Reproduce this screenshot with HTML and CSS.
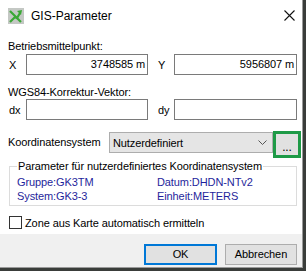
FILE: index.html
```html
<!DOCTYPE html>
<html>
<head>
<meta charset="utf-8">
<link rel="stylesheet" href="styles.css">
</head>
<body>
<div class="window">
  <div class="titlebar">
    <svg class="appicon" width="16" height="16" viewBox="0 0 16 16">
      <rect x="0" y="0" width="16" height="16" fill="#c4c8c4"/>
      <path d="M2 3 L13 14" stroke="#3aa835" stroke-width="2.2" fill="none"/>
      <path d="M2 14 L7 9 L9 10 L12 5" stroke="#3aa835" stroke-width="2.2" fill="none"/>
      <path d="M9 3 L14 2 L13 7 Z" fill="#3aa835"/>
    </svg>
    <span class="title">GIS-Parameter</span>
    <svg class="close" width="11" height="11" viewBox="0 0 11 11">
      <path d="M0.5 0.5 L10.5 10.5 M10.5 0.5 L0.5 10.5" stroke="#111" stroke-width="1.1"/>
    </svg>
  </div>
  <div class="content">
    <div class="heading h1">Betriebsmittelpunkt:</div>
    <div class="pair">
      <span class="lbl">X</span>
      <div class="field f1">3748585 m</div>
      <span class="lbl lbl-y">Y</span>
      <div class="field f2">5956807 m</div>
    </div>
    <div class="heading h2">WGS84-Korrektur-Vektor:</div>
    <div class="pair">
      <span class="lbl">dx</span>
      <div class="field f1"></div>
      <span class="lbl lbl-y">dy</span>
      <div class="field f2"></div>
    </div>
    <div class="koord">
      <span class="klbl">Koordinatensystem</span>
      <div class="combo">
        <span>Nutzerdefiniert</span>
        <svg width="9" height="5" viewBox="0 0 9 5"><path d="M0.5 0.5 L4.5 4.5 L8.5 0.5" stroke="#555" fill="none" stroke-width="1"/></svg>
      </div>
      <div class="dots"><div class="dots-inner">...</div></div>
    </div>
    <fieldset class="group">
      <legend>Parameter für nutzerdefiniertes Koordinatensystem</legend>
      <div class="grid">
        <span>Gruppe:GK3TM</span>
        <span>Datum:DHDN-NTv2</span>
        <span>System:GK3-3</span>
        <span>Einheit:METERS</span>
      </div>
    </fieldset>
    <label class="check"><span class="box"></span><span>Zone aus Karte automatisch ermitteln</span></label>
  </div>
  <div class="footer">
    <div class="btn ok">OK</div>
    <div class="btn">Abbrechen</div>
  </div>
</div>
</body>
</html>
```

FILE: styles.css
```css
html, body {
  margin: 0;
  padding: 0;
  background: #3a3d3a;
  height: 271px;
  overflow: hidden;
}
body {
  font-family: "Liberation Sans", Arial, sans-serif;
  font-size: 11px;
  letter-spacing: -0.1px;
  color: #000;
}
.window {
  width: 302px;
  height: 267px;
  background: #fff;
  border-right: 1px solid #9a9a9a;
  border-bottom: 1px solid #9a9a9a;
  display: flex;
  flex-direction: column;
}
.titlebar {
  height: 31px;
  display: flex;
  align-items: center;
  padding-left: 8px;
  flex: none;
}
.appicon { flex: none; margin-top: 1px; }
.title {
  margin-left: 7px;
  font-size: 12px;
  letter-spacing: 0;
  flex: 1;
}
.close { margin-right: 7px; margin-top: -1px; }
.content {
  flex: 1;
  padding: 0 0 0 8px;
  display: flex;
  flex-direction: column;
  white-space: nowrap;
}
.heading {
  line-height: 15px;
}
.h1 { margin-top: 8px; }
.h2 { margin-top: 11px; line-height: 13px; }
.pair {
  display: flex;
  align-items: center;
  height: 21px;
}
.pair > * { flex: none; }
.lbl {
  width: 18px;
  padding-left: 2px;
  box-sizing: border-box;
}
.lbl:first-child { padding-left: 1px; }
.lbl-y { width: 26px; padding-left: 10px; }
.field {
  height: 21px;
  box-sizing: border-box;
  border: 1px solid #7a7a7a;
  text-align: right;
  padding-right: 2px;
  line-height: 19px;
}
.f1 { width: 122px; }
.f2 { width: 123px; }
.koord {
  display: flex;
  align-items: flex-start;
  margin-top: 11px;
}
.koord > * { flex: none; }
.klbl {
  width: 101px;
  line-height: 21px;
  margin-top: 1px;
}
.combo {
  width: 164px;
  height: 21px;
  margin-top: 1px;
  box-sizing: border-box;
  background: #e5e5e5;
  border: 1px solid #adadad;
  display: flex;
  align-items: center;
  justify-content: space-between;
  padding: 0 5px 0 3px;
}
.dots {
  width: 28px;
  height: 27px;
  box-sizing: border-box;
  border: 3px solid #1e9a47;
  display: flex;
}
.dots-inner {
  flex: 1;
  background: #e1e1e1;
  text-align: center;
  line-height: 26px;
  font-size: 12px;
}
.group {
  margin: 2px 0 0 1px;
  width: 288px;
  box-sizing: border-box;
  border: 1px solid #dcdcdc;
  padding: 3px 6px 2px 7px;
}
.group legend {
  padding: 0 1px;
  margin-left: 0;
  line-height: 12px;
}
.grid {
  display: grid;
  grid-template-columns: 140px 1fr;
  line-height: 14px;
  color: #1f1f9c;
}
.check {
  display: flex;
  align-items: center;
  margin-top: 10px;
  margin-left: 1px;
}
.box {
  width: 13px;
  height: 13px;
  box-sizing: border-box;
  border: 1px solid #333;
  background: #fff;
  margin-right: 3px;
}
.footer {
  height: 33px;
  flex: none;
  background: #f0f0f0;
  display: flex;
  justify-content: flex-end;
  align-items: flex-start;
  padding: 10px 5px 0 0;
  box-sizing: border-box;
  gap: 8px;
}
.btn {
  width: 72px;
  height: 21px;
  box-sizing: border-box;
  border: 1px solid #adadad;
  background: #e1e1e1;
  text-align: center;
  line-height: 19px;
}
.btn.ok {
  border: 2px solid #0078d7;
  line-height: 17px;
  width: 73px;
}
```
